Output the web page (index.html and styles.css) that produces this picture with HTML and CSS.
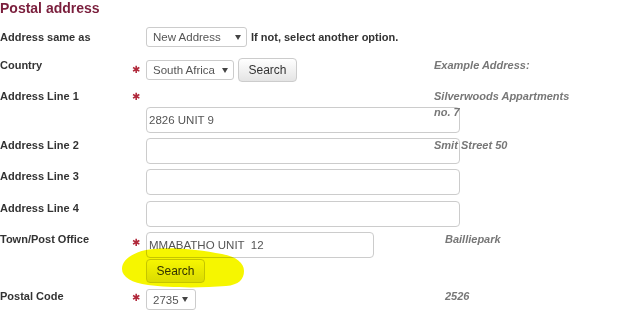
FILE: index.html
```html
<!DOCTYPE html>
<html lang="en">
<head>
<meta charset="utf-8">
<title>Postal address</title>
<link rel="stylesheet" href="styles.css">
</head>
<body>
<div class="page">
  <h2 class="title">Postal address</h2>
  <form class="form">
    <div class="row row-1">
      <span class="label label-mid">Address same as</span>
      <span class="star-cell"></span>
      <div class="controls">
        <span class="select sel-new">New Address<i class="caret"></i></span>
        <span class="hint">If not, select another option.</span>
      </div>
    </div>

    <div class="row row-2">
      <span class="label">Country</span>
      <span class="star-cell star-btn">&#10033;</span>
      <div class="controls">
        <span class="select sel-country">South Africa<i class="caret"></i></span>
        <button type="button" class="btn">Search</button>
      </div>
      <span class="example">Example Address:</span>
    </div>

    <div class="row row-3 two-line">
      <span class="label">Address Line 1</span>
      <span class="star-cell star-label">&#10033;</span>
      <span class="example example-span">Silverwoods Appartments no. 7</span>
      <div class="controls second-line">
        <input class="text text-wide" type="text" value="2826 UNIT 9">
      </div>
    </div>

    <div class="row row-4">
      <span class="label">Address Line 2</span>
      <span class="star-cell"></span>
      <div class="controls">
        <input class="text text-wide" type="text" value="">
      </div>
      <span class="example">Smit Street 50</span>
    </div>

    <div class="row row-5">
      <span class="label">Address Line 3</span>
      <span class="star-cell"></span>
      <div class="controls">
        <input class="text text-wide" type="text" value="">
      </div>
    </div>

    <div class="row row-6">
      <span class="label">Address Line 4</span>
      <span class="star-cell"></span>
      <div class="controls">
        <input class="text text-wide" type="text" value="">
      </div>
    </div>

    <div class="row row-7">
      <span class="label">Town/Post Office</span>
      <span class="star-cell star-input">&#10033;</span>
      <div class="controls stack">
        <input class="text text-town" type="text" value="MMABATHO UNIT  12">
        <button type="button" class="btn">Search</button>
      </div>
      <span class="example example-shift">Bailliepark</span>
    </div>

    <div class="row row-8">
      <span class="label">Postal Code</span>
      <span class="star-cell star-sel">&#10033;</span>
      <div class="controls">
        <span class="select sel-code">2735<i class="caret"></i></span>
      </div>
      <span class="example example-shift">2526</span>
    </div>
  </form>

  <svg class="highlight" width="128" height="46" viewBox="0 0 128 46" aria-hidden="true">
    <path d="M2,25 C2,16 12,9 26,6 C46,2 78,5 102,10 C117,13 124,19 124,27 C124,35 119,41 106,42 C82,44 50,44 28,41 C12,39 2,33 2,25 Z" fill="#f6f600"/>
  </svg>
</div>
</body>
</html>
```

FILE: styles.css
```css
html, body {
  margin: 0;
  padding: 0;
  background: #ffffff;
}

.page {
  position: relative;
  width: 639px;
  height: 331px;
  overflow: hidden;
  font-family: "Liberation Sans", Arial, sans-serif;
}

.title {
  margin: 0;
  font-size: 14px;
  line-height: 16px;
  font-weight: bold;
  color: #7a1e3c;
}

.form {
  display: flex;
  flex-direction: column;
  margin: 0;
}

.row {
  display: grid;
  grid-template-columns: 130px 16px 288px 1fr;
  align-items: start;
}

.row-1 { margin-top: 11px; align-items: center; height: 20px; }
.row-2 { margin-top: 11px; }
.row-3 { margin-top: 7px; }
.row-4 { margin-top: 5px; }
.row-5 { margin-top: 5px; }
.row-6 { margin-top: 6px; }
.row-7 { margin-top: 5px; }
.row-8 { margin-top: 6px; }

.two-line {
  grid-template-rows: 14px auto;
  row-gap: 4px;
}

.label {
  font-size: 11px;
  line-height: 14px;
  font-weight: bold;
  color: #333333;
  white-space: nowrap;
}

.label-mid {
  align-self: center;
}

.star-cell {
  color: #b0283a;
  font-family: "DejaVu Sans", sans-serif;
  font-size: 10px;
  padding-left: 2px;
}

.star-btn { line-height: 23px; }
.star-label { line-height: 15px; }
.star-input { line-height: 22px; }
.star-sel { line-height: 17px; }

.controls {
  display: flex;
  align-items: center;
  gap: 4px;
}

.second-line {
  grid-column: 3;
  grid-row: 2;
}

.stack {
  flex-direction: column;
  align-items: flex-start;
  gap: 1px;
}

.select {
  box-sizing: border-box;
  display: inline-flex;
  align-items: center;
  justify-content: space-between;
  flex-shrink: 0;
  height: 20px;
  padding: 0 5px 0 6px;
  border: 1px solid #cccccc;
  border-radius: 3px;
  background: #ffffff;
  font-size: 11.5px;
  color: #555555;
}

.sel-new { width: 101px; }
.sel-country { width: 88px; }
.sel-code { width: 50px; height: 21px; padding-right: 7px; }

.caret {
  display: inline-block;
  width: 0;
  height: 0;
  border-left: 3px solid transparent;
  border-right: 3px solid transparent;
  border-top: 5px solid #444444;
}

.hint {
  font-size: 11px;
  font-weight: bold;
  color: #333333;
  white-space: nowrap;
}

.btn {
  box-sizing: border-box;
  width: 59px;
  height: 24px;
  margin: 0;
  padding: 0;
  flex-shrink: 0;
  border: 1px solid #cccccc;
  border-radius: 4px;
  background: linear-gradient(#ffffff, #e4e4e4);
  font-family: "Liberation Sans", Arial, sans-serif;
  font-size: 12px;
  color: #333333;
}

.text {
  box-sizing: border-box;
  height: 26px;
  margin: 0;
  padding: 0 2px;
  flex-shrink: 0;
  border: 1px solid #cccccc;
  border-radius: 4px;
  background: transparent;
  font-family: "Liberation Sans", Arial, sans-serif;
  font-size: 11.5px;
  color: #555555;
}

.text-wide { width: 314px; }
.text-town { width: 228px; }

.example {
  position: relative;
  font-size: 11px;
  line-height: 14px;
  font-style: italic;
  font-weight: bold;
  color: #777777;
  white-space: nowrap;
}

.example-span {
  grid-column: 4;
  grid-row: 1 / span 2;
  white-space: normal;
  width: 150px;
  line-height: 16px;
  margin-top: -1px;
}

.example-shift {
  margin-left: 11px;
}

.highlight {
  position: absolute;
  left: 120px;
  top: 244px;
  mix-blend-mode: multiply;
}
```
